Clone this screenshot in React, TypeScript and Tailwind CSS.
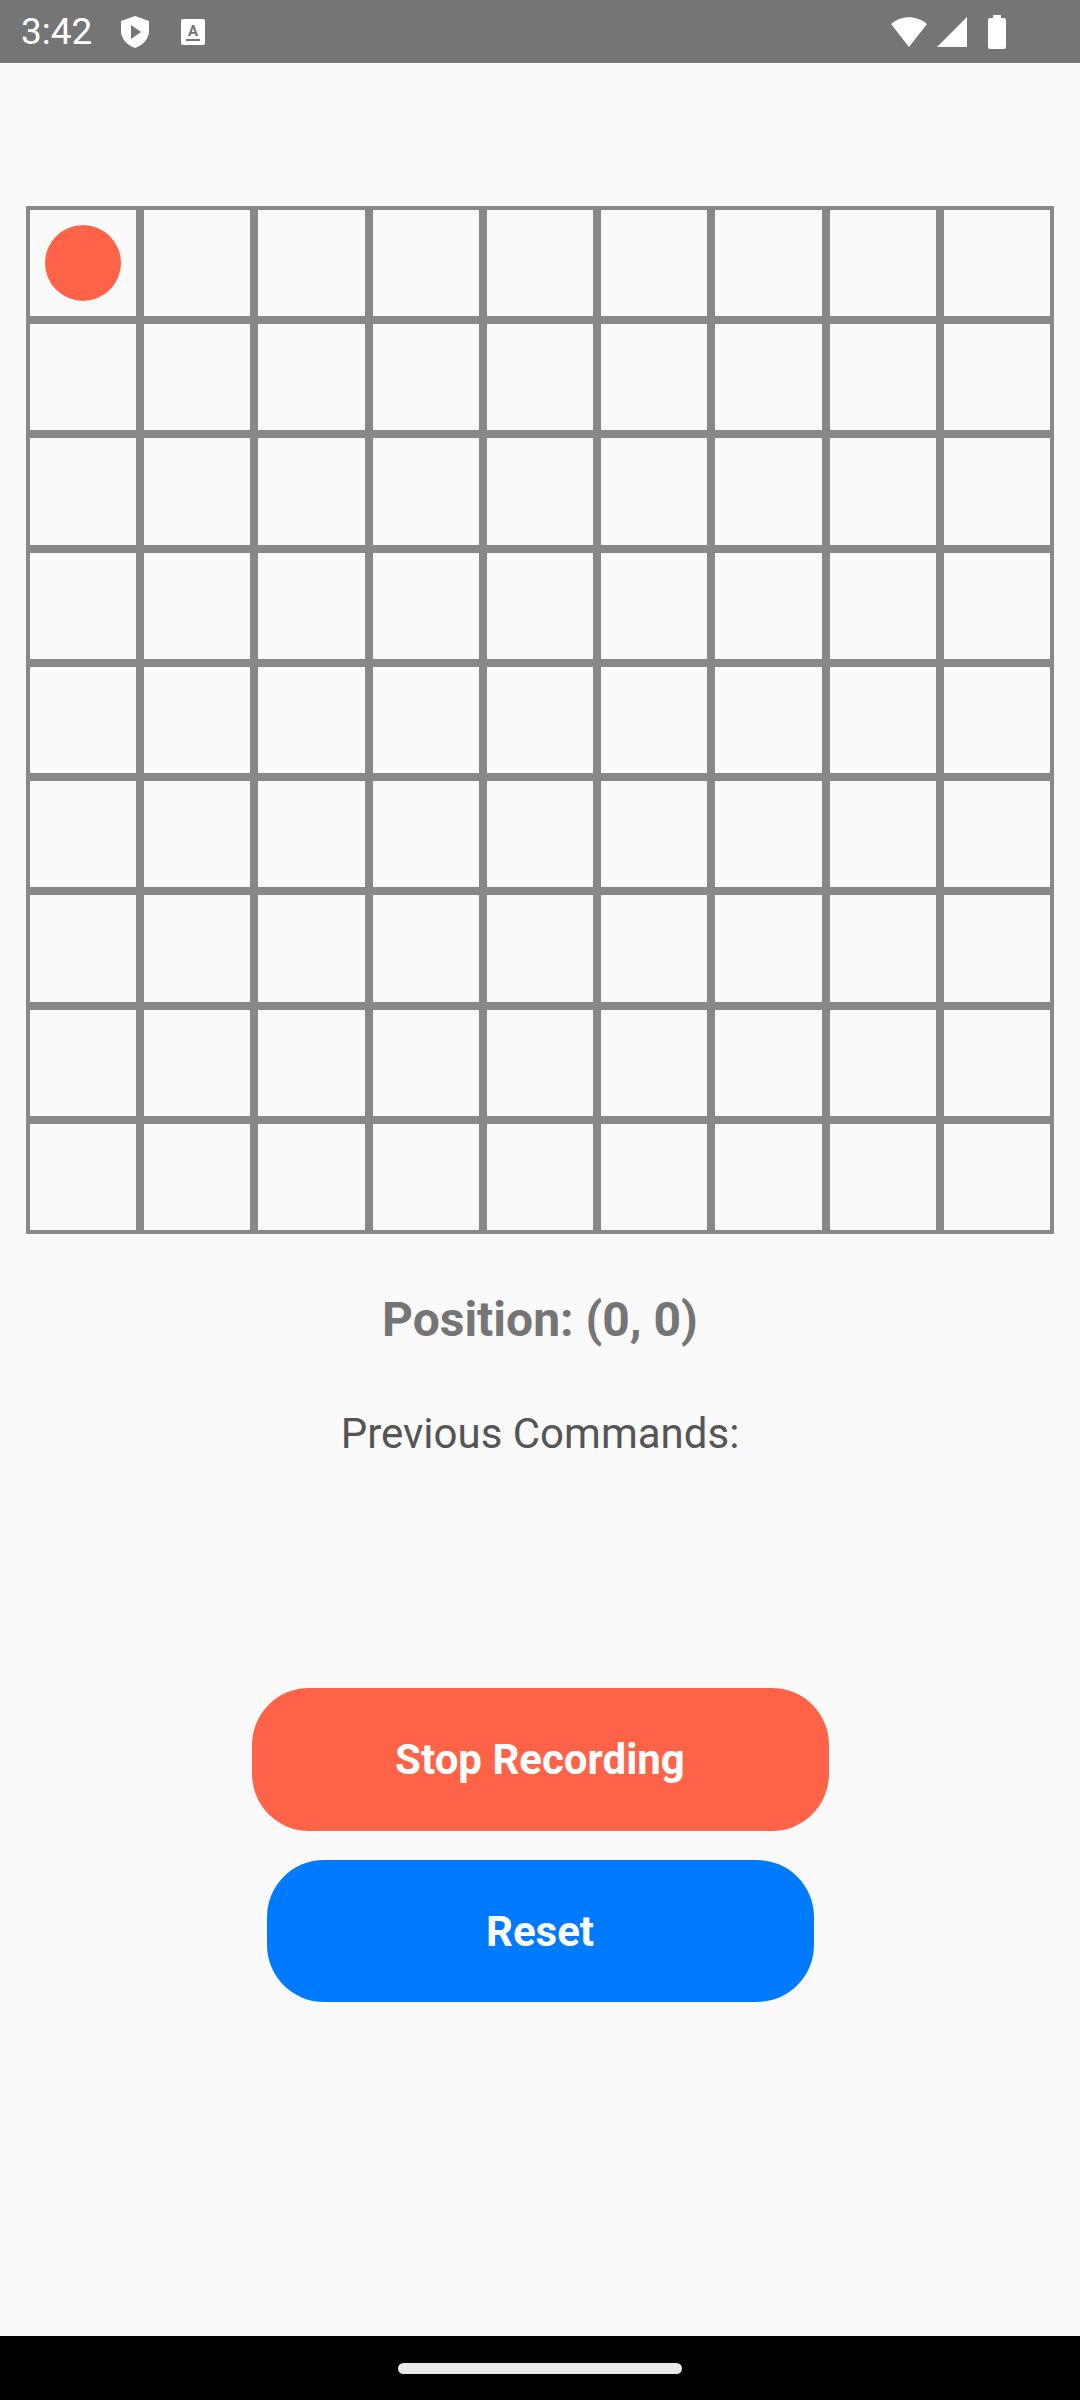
const cells = Array.from({ length: 81 }, (_, i) => i);

function StatusBar() {
  return (
    <div className="h-[63px] bg-[#757575] flex items-center justify-between pl-[21px] pr-[74px] text-white">
      <div className="flex items-center">
        <span className="text-[37px] leading-none" style={{ fontFamily: "Roboto, sans-serif" }}>
          3:42
        </span>
        <svg width="32" height="34" viewBox="0 0 32 34" className="ml-[27px]">
          <path d="M16 1 L30 6 V16 C30 24 24 30 16 33 C8 30 2 24 2 16 V6 Z" fill="white" />
          <path d="M12 10 L22 17 L12 24 Z" fill="#757575" />
        </svg>
        <svg width="24" height="26" viewBox="0 0 24 26" className="ml-[30px]">
          <rect x="0" y="0" width="24" height="26" rx="2" fill="white" />
          <text x="12" y="17" textAnchor="middle" fontSize="15" fontWeight="700" fill="#757575" fontFamily="Roboto, sans-serif">
            A
          </text>
          <rect x="5" y="20" width="14" height="2" fill="#757575" />
        </svg>
      </div>
      <div className="flex items-center gap-[8px]">
        <svg width="38" height="32" viewBox="0 0 38 32">
          <path d="M19 31 L1 8 C11 -1 27 -1 37 8 Z" fill="white" />
        </svg>
        <svg width="32" height="32" viewBox="0 0 32 32">
          <path d="M31 1 V31 H1 Z" fill="white" />
        </svg>
        <svg width="18" height="34" viewBox="0 0 18 34" className="ml-[12px]">
          <rect x="5" y="0" width="8" height="4" fill="white" />
          <rect x="0" y="3" width="18" height="31" rx="2" fill="white" />
        </svg>
      </div>
    </div>
  );
}

export default function App() {
  return (
    <div className="w-[1080px] h-[2400px] bg-[#fafafa] flex flex-col" style={{ fontFamily: "Roboto, sans-serif" }}>
      <StatusBar />
      <div className="flex-1 flex flex-col items-center">
        {/* 9x9 board */}
        <div className="mt-[143px] w-[1028px] grid grid-cols-9">
          {cells.map((i) => (
            <div key={i} className="aspect-square border-4 border-[#888888] flex items-center justify-center">
              {i === 0 && <div className="w-[76px] h-[76px] rounded-full bg-[#ff6347]" />}
            </div>
          ))}
        </div>
        <p className="mt-[56px] text-[48px] leading-[60px] font-bold text-[#757575]">Position: (0, 0)</p>
        <p className="mt-[59px] text-[42px] leading-[49px] text-[#555555]">Previous Commands:</p>
        <button className="mt-[230px] w-[577px] h-[143px] rounded-[57px] bg-[#ff6347] text-white text-[42px] font-bold">
          Stop Recording
        </button>
        <button className="mt-[29px] w-[547px] h-[142px] rounded-[57px] bg-[#007bff] text-white text-[42px] font-bold">
          Reset
        </button>
      </div>
      <div className="h-[64px] bg-black flex items-center justify-center">
        <div className="w-[284px] h-[11px] rounded-full bg-[#eaeaea]" />
      </div>
    </div>
  );
}
